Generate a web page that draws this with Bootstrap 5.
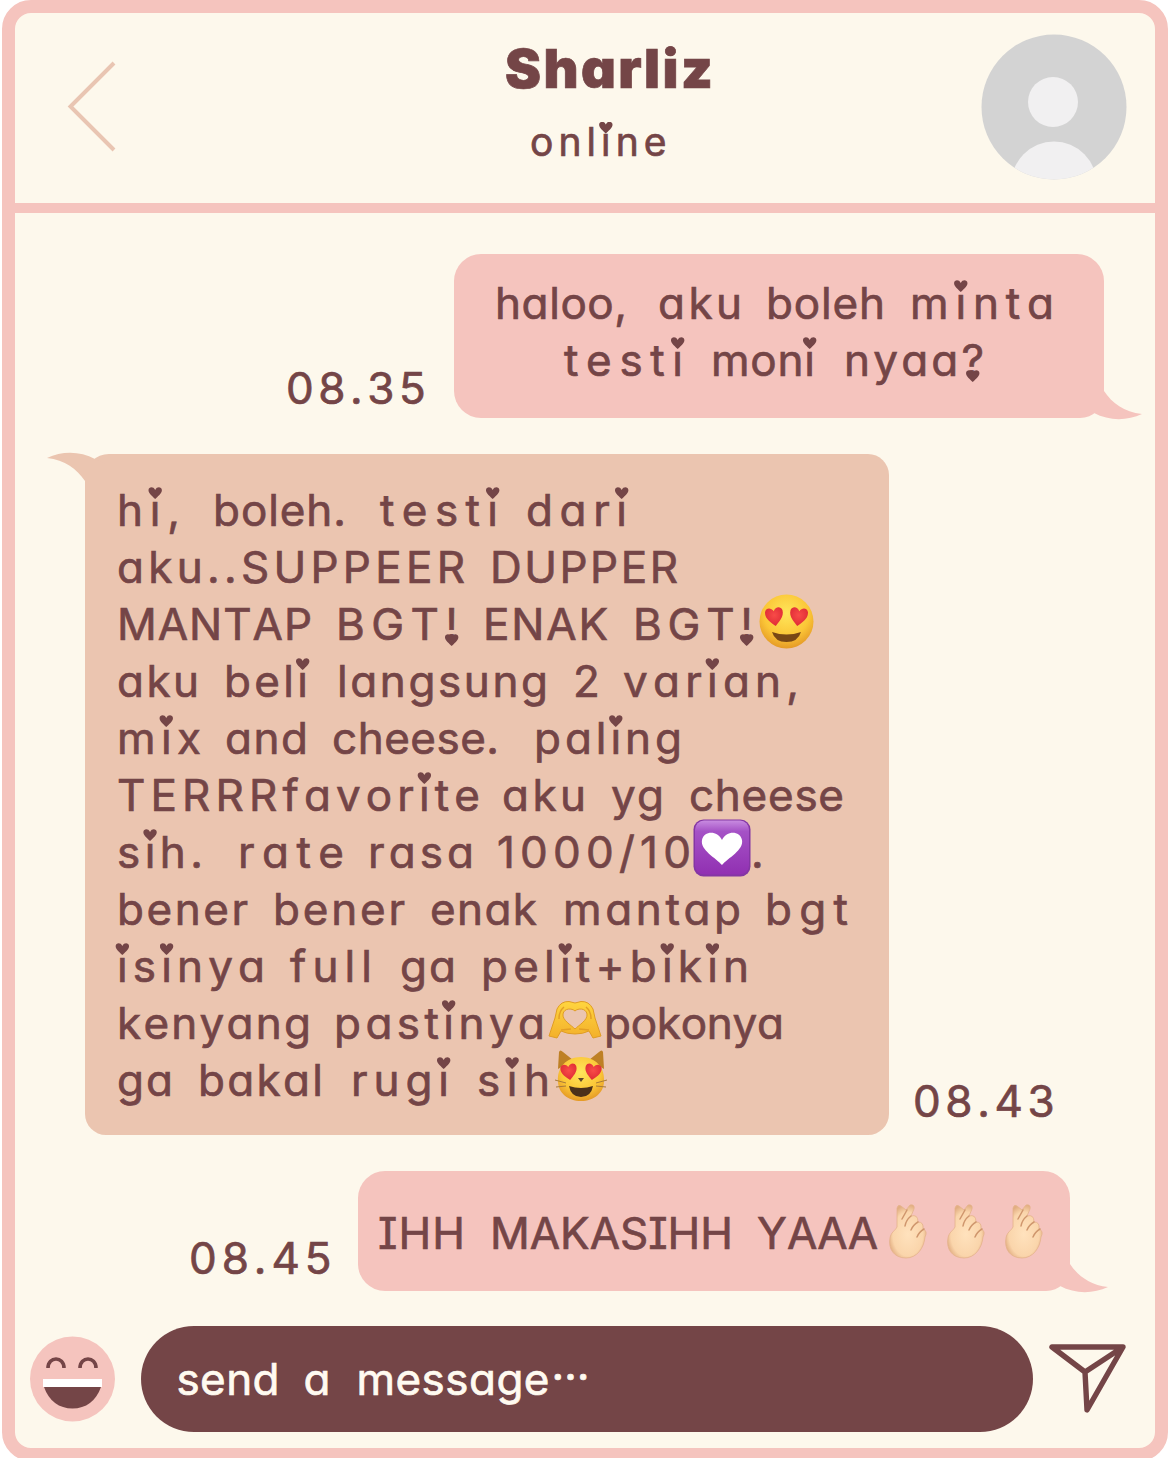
<!DOCTYPE html>
<html lang="id">
<head>
<meta charset="utf-8">
<meta name="viewport" content="width=device-width, initial-scale=1">
<title>Sharliz</title>
<link href="https://cdn.jsdelivr.net/npm/bootstrap@5.3.0/dist/css/bootstrap.min.css" rel="stylesheet">
<style>
:root{--rose:#f5c4be;--peach:#ebc5b0;--plum:#744547;--cream:#fdf8ec}
html,body{height:1458px;overflow:hidden;background:#fff}
body{font-family:Inter,"Open Sans",sans-serif;color:var(--plum);font-size:44px;line-height:57px;font-feature-settings:"cv11","cv08","calt" 0;font-kerning:none}
.phone{--bg:var(--cream);margin:0 2px;height:1461px;border:13px solid var(--rose);border-radius:29px;background:var(--cream);overflow:hidden}
.topbar{height:200px;border-bottom:10px solid var(--rose);padding:21px 28px 0 51px}
.name-line{font-size:54px;font-weight:900;line-height:60px;margin:5px 0 0 22px;-webkit-text-stroke:1.5px var(--plum);paint-order:stroke fill;stroke-linejoin:round}
.status-line{font-size:39px;line-height:57px;margin:14px 0 0 2px}
.fit{display:inline-block;white-space:pre;-webkit-text-stroke:.7px currentColor}
.word{display:inline-block;white-space:pre}
.row-line{height:57px;display:flex;align-items:center}
.bubble{position:relative;flex:none}
.rose{--bg:var(--rose);background:var(--rose);border-radius:27px 27px 24px 27px}
.peach{--bg:var(--peach);background:var(--peach);border-radius:24px 21px 21px 21px}
.tail{position:absolute;width:60px;height:50px;right:-40px;bottom:-10px;fill:var(--rose)}
.tail-in{right:auto;bottom:auto;left:-40px;top:-10px;transform:rotate(180deg);fill:var(--peach)}
.msg-a{margin:41px 51px 0 0}
.msg-a .bubble{width:650px;height:164px;padding:21px 0}
.msg-b{margin:36px 0 0 70px}
.msg-b .bubble{width:804px;height:681px;padding:28px 0 0 32px}
.msg-c{margin:36px 85px 0 0}
.msg-c .bubble{width:712px;height:120px;padding:34px 0 0 20px}
.composer{margin:35px 28px 0 15px;height:106px}
.pill{width:892px;height:106px;background:var(--plum);color:#fffaf0;padding:0 0 0 36px}
.hrt{position:relative}
.hrt::before{content:"";position:absolute;width:8px;height:.27em;left:calc(50% - 4px - var(--ls,0px)/2);top:.12em;background:var(--bg)}
.hrt::after{content:"";position:absolute;width:14px;height:12px;left:calc(50% - 7px - var(--ls,0px)/2);top:.09em;background:currentColor;clip-path:path("M7 12C5 10 0 6 .3 3C.6 0 5 -1 7 3C9 -1 13.4 0 13.7 3C14 6 9 10 7 12Z")}
.hrt.low::before{display:none}
.hrt.low::after{top:.84em}
svg{flex:none}
</style>
<script src="https://cdn.jsdelivr.net/npm/bootstrap@5.3.0/dist/js/bootstrap.bundle.min.js"></script>
</head>
<body>
<svg width="0" height="0" class="position-absolute">
<defs>
<radialGradient id="gold" cx=".5" cy=".35" r=".65"><stop offset="0" stop-color="#ffe65b"/><stop offset=".65" stop-color="#fbc637"/><stop offset="1" stop-color="#e59a26"/></radialGradient>
<radialGradient id="red" cx=".5" cy=".4" r=".6"><stop offset="0" stop-color="#f84b48"/><stop offset="1" stop-color="#df2b35"/></radialGradient>
<linearGradient id="violet" x2="0" y2="1"><stop offset="0" stop-color="#c88be0"/><stop offset=".2" stop-color="#a552c6"/><stop offset="1" stop-color="#9130b2"/></linearGradient>
<radialGradient id="skin" cx=".5" cy=".55" r=".55"><stop offset="0" stop-color="#ffe2bd"/><stop offset=".75" stop-color="#fad5ab"/><stop offset="1" stop-color="#e2ae82"/></radialGradient>
<linearGradient id="palm" x2="0" y2="1"><stop offset="0" stop-color="#ffd53f"/><stop offset="1" stop-color="#f3b02b"/></linearGradient>
<path id="love" d="M0 8C-3 5-9 1-8-5C-7-9-2-9 0-5C2-9 7-9 8-5C9 1 3 5 0 8Z"/>
<symbol id="tail" viewBox="0 0 60 50"><path d="M0 10H20V13C28 25 40 34 58 36C43 43 25 43 10 35L0 30Z"/></symbol>
<symbol id="finger" viewBox="0 0 40 58">
<path d="M8 24L8 5Q9 1 12 3L17 7L21 2Q26 1 25 6L22 13Q29 11 29 19Q35 19 34 26Q39 28 36 34C35 45 28 55 17 55C5 55-1 46 1 35C2 29 6 28 8 24Z" fill="url(#skin)" stroke="#e5b38b" stroke-width=".8"/>
<path d="M18 7L13 16M22 13Q17 17 16 23M29 19Q24 22 22 27M35 26Q30 29 28 34" fill="none" stroke="#cf966d" stroke-width="1.5" stroke-linecap="round"/>
</symbol>
</defs>
</svg>
<main class="phone">
  <header class="topbar d-flex justify-content-between align-items-start">
    <svg width="52" height="96" viewBox="0 0 52 96" style="margin-top:24px"><path d="M48 5L4.500 48.500L48 92" fill="none" stroke="#e9c5b2" stroke-width="4"/></svg>
    <div class="d-flex flex-column align-items-center" style="margin-left:98px">
      <div class="name-line"><span class="fit" data-w="209">Sharliz</span></div>
      <div class="status-line"><span class="fit" data-w="139">online</span></div>
    </div>
    <svg width="146" height="146" viewBox="0 0 146 146"><defs><clipPath id="disc"><circle cx="73" cy="73" r="72.500"/></clipPath></defs><g clip-path="url(#disc)"><path fill="#d3d3d3" d="M0 0H146V146H0Z"/><circle cx="72" cy="68" r="25" fill="#f1f0f1"/><ellipse cx="73" cy="151" rx="43" ry="43.500" fill="#f1f0f1"/></g></svg>
  </header>

  <section class="msg-a d-flex justify-content-end align-items-end">
    <span class="fit" data-w="142" style="margin:0 26px 1px 0">08.35</span>
    <div class="bubble rose">
      <div class="row-line" style="padding-left:41px"><span class="fit" data-p="497,627,660,742,768,885,912,1054">haloo, aku boleh minta</span></div>
      <div class="row-line" style="padding-left:110px"><span class="fit" data-p="565,682,712,814,845,983">testi moni nyaa?</span></div>
      <svg class="tail"><use href="#tail"/></svg>
    </div>
  </section>

  <section class="msg-b d-flex align-items-end">
    <div class="bubble peach">
      <div class="row-line"><span class="fit" data-p="118,179,214,345,381,497,527,626">hi, boleh. testi dari</span></div>
      <div class="row-line"><span class="fit" data-p="118,464,491,677">aku..SUPPEER DUPPER</span></div>
      <div class="row-line"><span class="fit" data-p="118,311,337,457,484,607,634,752">MANTAP BGT! ENAK BGT!</span>
        <svg width="55" height="55" viewBox="0 0 55 55" style="margin:-6px 0 0 6px"><circle cx="27.500" cy="27.500" r="27" fill="url(#gold)"/><use href="#love" transform="translate(15.500 23) rotate(-8) scale(1.1 1.150)" fill="url(#red)"/><use href="#love" transform="translate(39.500 23) rotate(8) scale(1.1 1.150)" fill="url(#red)"/><path d="M13 38Q27.500 43 42 38Q39 48 27.500 48Q16 48 13 38Z" fill="#784715"/></svg></div>
      <div class="row-line"><span class="fit" data-p="118,198,225,307,338,547,574,597,624,798">aku beli langsung 2 varian,</span></div>
      <div class="row-line"><span class="fit" data-p="118,200,226,307,333,498,535,681">mix and cheese. paling</span></div>
      <div class="row-line"><span class="fit" data-p="118,479,503,585,612,663,690,843">TERRRfavorite aku yg cheese</span></div>
      <div class="row-line"><span class="fit" data-p="118,202,239,343,369,473,498,690">sih. rate rasa 1000/10</span><svg width="58" height="58" viewBox="0 0 58 58" style="margin:-10px 0 0 2px"><rect x=".5" y=".5" width="57" height="57" rx="10" fill="#8436a4"/><rect x="2" y="1.500" width="54" height="54" rx="9" fill="url(#violet)"/><path d="M29 46C23 39 7 31 9 21C11 12 24 11 29 21C34 11 47 12 49 21C51 31 35 39 29 46Z" fill="#fff"/></svg><span class="fit">.</span></div>
      <div class="row-line"><span class="fit" data-p="118,247,274,404,431,536,564,740,766,847">bener bener enak mantap bgt</span></div>
      <div class="row-line"><span class="fit" data-p="118,264,291,371,401,455,482,748">isinya full ga pelit+bikin</span></div>
      <div class="row-line"><span class="fit" data-p="118,310,335,544">kenyang pastinya</span><svg width="56" height="40" viewBox="0 0 56 40" style="margin:-8px 0 0 2px"><path d="M2 36L8 18L10 9Q14 1 22 1.500L28 3L34 1.500Q42 1 46 9L48 18L54 36L46 38L42 31Q36 34 28 34Q20 34 14 31L10 38ZM28 29C24 25 15 20 16 14C17 8 25 8 28 11C31 8 39 8 40 14C41 20 32 25 28 29Z" fill="url(#palm)" fill-rule="evenodd" stroke="#e09d25" stroke-linejoin="round"/><path d="M17 7Q12 11 12 19M39 7Q44 11 44 19M14 30L24 29M42 30L32 29" fill="none" stroke="#e39f25" stroke-width="1.500"/></svg><span class="fit" data-p="607,785" style="margin-left:1px">pokonya</span></div>
      <div class="row-line"><span class="fit" data-p="118,172,199,322,352,448,478,549">ga bakal rugi sih</span>
        <svg width="56" height="54" viewBox="0 0 56 54" style="margin:-10px 0 0 3px"><path d="M5 20L6 3Q7 0 10 3L20 11ZM51 20L50 3Q49 0 46 3L36 11Z" fill="#be8025"/><path d="M28 8C43 8 52 19 51 32C51 44 41 52 28 52C15 52 5 44 5 32C4 19 13 8 28 8Z" fill="url(#gold)"/><use href="#love" transform="translate(16 23) rotate(-8)" fill="url(#red)"/><use href="#love" transform="translate(40 23) rotate(8)" fill="url(#red)"/><path d="M25 29H31L28 33Z" fill="#60472a"/><path d="M16 37Q28 41 40 37Q38 48 28 48Q18 48 16 37Z" fill="#4b301a"/><path d="M2 31L13 34M3 38L13 37M54 31L43 34M53 38L43 37" stroke="#a77a39" stroke-width="1"/></svg></div>
      <svg class="tail tail-in"><use href="#tail"/></svg>
    </div>
    <span class="fit" data-w="144" style="margin:0 0 5px 24px">08.43</span>
  </section>

  <section class="msg-c d-flex justify-content-end align-items-end">
    <span class="fit" data-w="145" style="margin:0 24px 4px 0">08.45</span>
    <div class="bubble rose">
      <div class="row-line"><span class="fit" data-p="378,463,490,731,757,876">IHH MAKASIHH YAAA</span>
        <div class="d-flex" style="gap:18px;margin:-3px 0 0 11px"><svg width="40" height="58"><use href="#finger"/></svg><svg width="40" height="58"><use href="#finger"/></svg><svg width="40" height="58"><use href="#finger"/></svg></div></div>
      <svg class="tail"><use href="#tail"/></svg>
    </div>
  </section>

  <footer class="composer d-flex align-items-center justify-content-between">
    <svg width="86" height="86" viewBox="0 0 86 86"><circle cx="42.500" cy="43" r="42.500" fill="#f5c4be"/><path d="M18 32C18 20 34 20 34 32M50 32C50 20 66 20 66 32" fill="none" stroke="#744547" stroke-width="3.600"/><path d="M13 43H72V51H13Z" fill="#fff"/><path d="M14 51H71C66 65 56 72.500 42.500 72.500C29 72.500 19 65 14 51Z" fill="#744547"/></svg>
    <div class="pill rounded-pill d-flex align-items-center" style="margin-left:8px"><span class="fit" data-p="178,279,305,330,358,549">send a message</span><span class="fit" style="margin:-30px 0 0 2px">…</span></div>
    <svg width="78" height="72" viewBox="0 0 78 72"><path d="M3 4H74L38 67L36 29ZM36 29L74 4" fill="none" stroke="#744547" stroke-width="5.400" stroke-linejoin="round"/></svg>
  </footer>
</main>
<script>
// Letter-space every word over its own span, then put hearts on the dots of i, ! and ?
function hearts(text) {
  return text.replace(/[i!?]/g, function (c) {
    return '<span class="hrt' + (c === 'i' ? '' : ' low') + '">' + c + '</span>';
  });
}
document.querySelectorAll('.fit').forEach(function (el) {
  var text = el.textContent, ls;
  if (el.dataset.p) {
    var p = el.dataset.p.split(',').map(Number), words = text.split(' ');
    el.textContent = '';
    words.forEach(function (w, i) {
      var s = document.createElement('span');
      s.className = 'word';
      s.textContent = w;
      el.appendChild(s);
      var span = p[2 * i + 1] - p[2 * i];
      ls = w.length > 1 ? (span + 2 - s.getBoundingClientRect().width) / (w.length - 1) : 0;
      var last = i === words.length - 1;
      s.innerHTML = hearts(w) + (last ? '' : ' ');
      s.style.letterSpacing = ls + 'px';
      s.style.setProperty('--ls', ls + 'px');
      s.style.width = (last ? span + 2 : p[2 * i + 2] - p[2 * i]) + 'px';
    });
  } else if (el.dataset.w) {
    ls = (el.dataset.w - el.getBoundingClientRect().width) / (text.length - 0.5);
    el.style.letterSpacing = ls + 'px';
    el.style.width = el.dataset.w + 'px';
    el.style.setProperty('--ls', ls + 'px');
    if (!el.closest('.name-line')) el.innerHTML = hearts(text);
  }
});
</script>
</body>
</html>
